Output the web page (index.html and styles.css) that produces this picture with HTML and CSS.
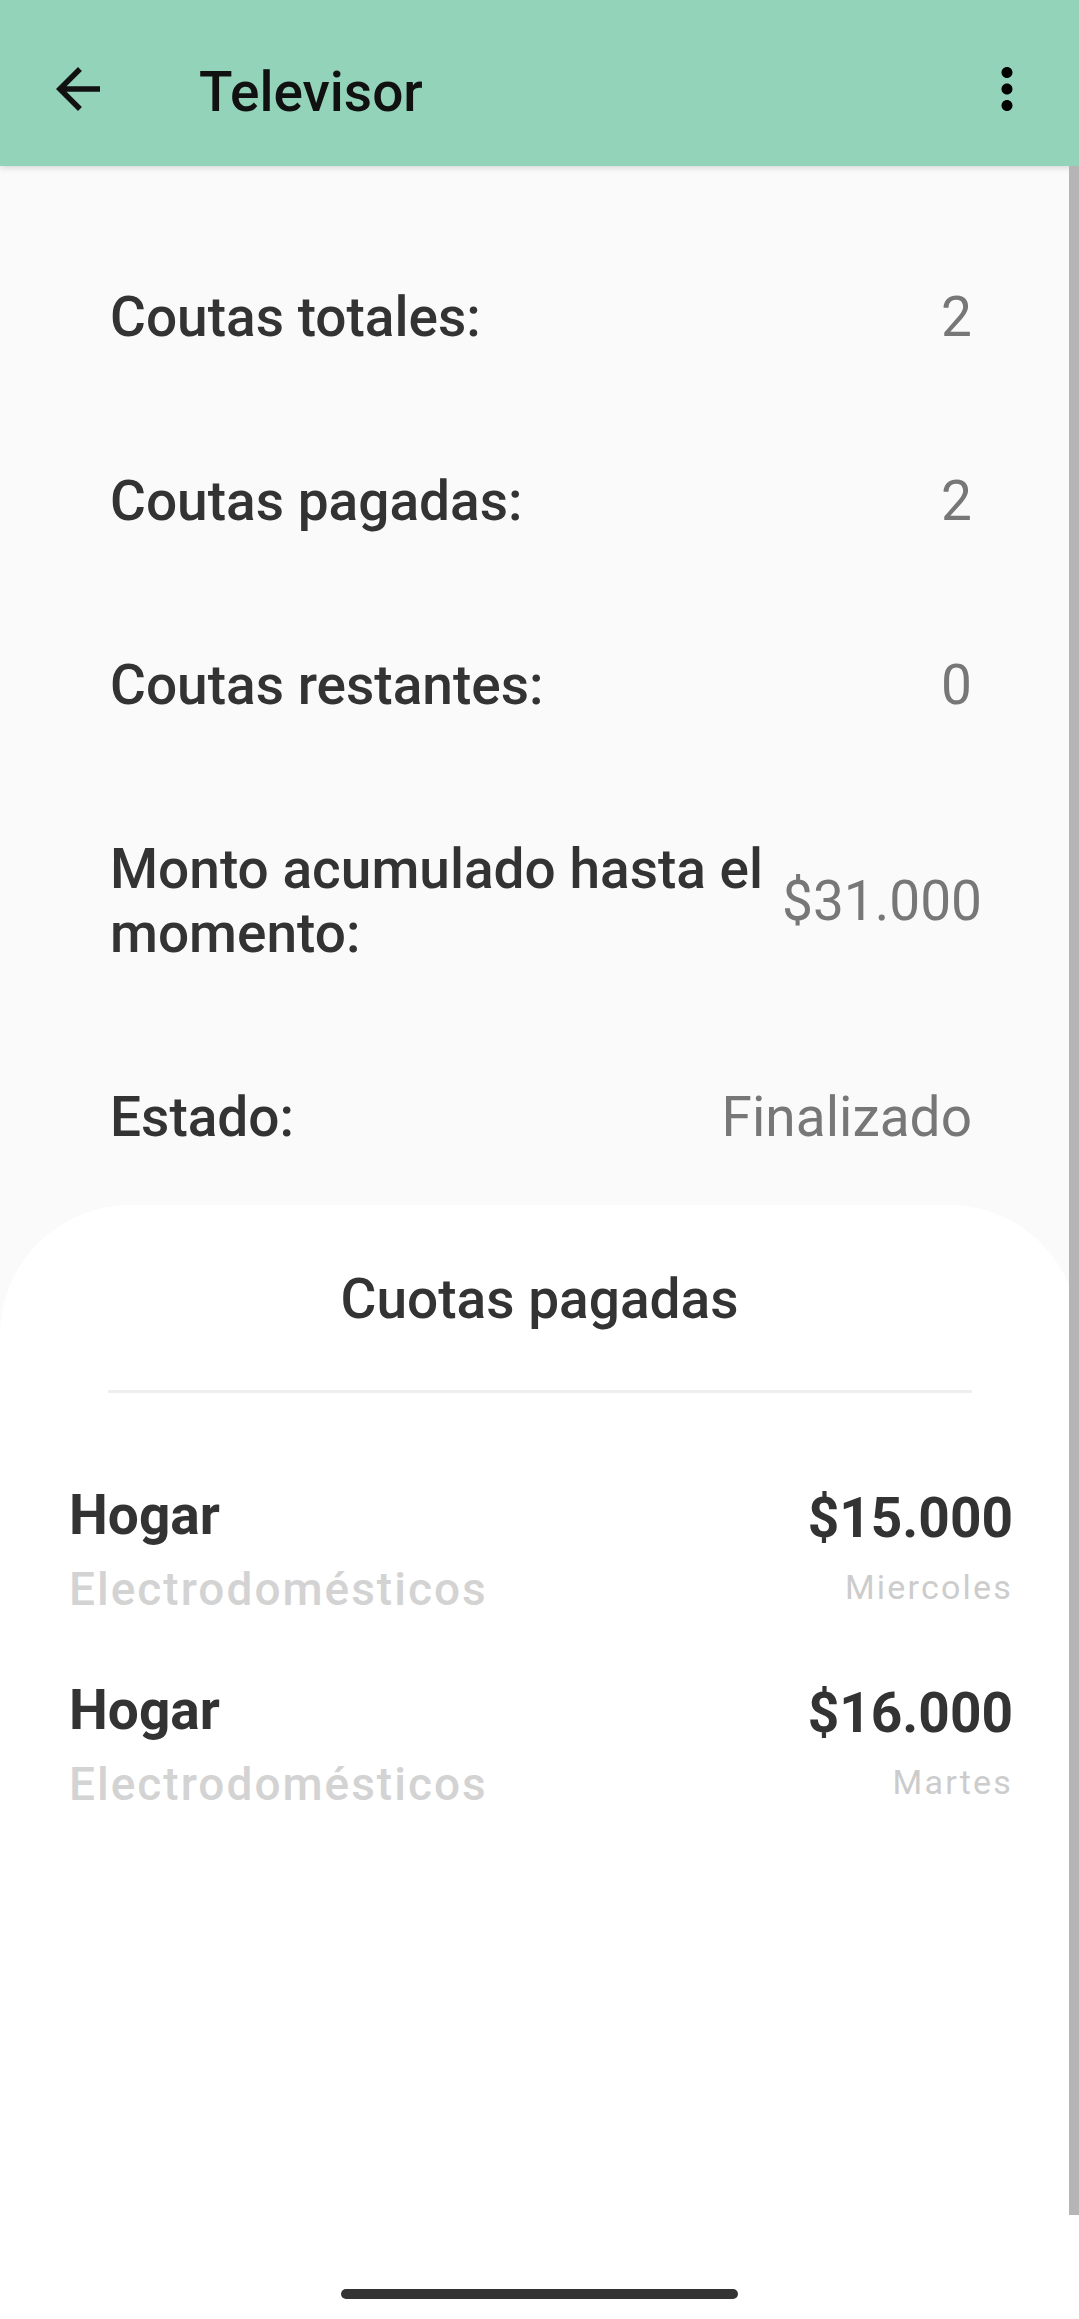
FILE: index.html
```html
<!DOCTYPE html>
<html lang="es">
<head>
<meta charset="utf-8">
<title>Televisor</title>
<link rel="stylesheet" href="styles.css">
</head>
<body>
<div class="screen">
  <header class="appbar">
    <span class="icon-btn back">
      <svg viewBox="0 0 24 24" width="66" height="66"><path d="M20 11H7.83l5.59-5.59L12 4l-8 8 8 8 1.41-1.41L7.83 13H20v-2z" fill="#111"/></svg>
    </span>
    <h1 class="title">Televisor</h1>
    <span class="icon-btn more">
      <svg viewBox="0 0 24 24" width="66" height="66"><path d="M12 8c1.1 0 2-.9 2-2s-.9-2-2-2-2 .9-2 2 .9 2 2 2zm0 2c-1.1 0-2 .9-2 2s.9 2 2 2 2-.9 2-2-.9-2-2-2zm0 6c-1.1 0-2 .9-2 2s.9 2 2 2 2-.9 2-2-.9-2-2-2z" fill="#000"/></svg>
    </span>
  </header>

  <main class="content">
    <section class="info">
      <div class="row"><span class="label">Coutas totales:</span><span class="value">2</span></div>
      <div class="row"><span class="label">Coutas pagadas:</span><span class="value">2</span></div>
      <div class="row"><span class="label">Coutas restantes:</span><span class="value">0</span></div>
      <div class="row"><span class="label">Monto acumulado hasta el momento:</span><span class="value value-wide">$31.000</span></div>
      <div class="row"><span class="label">Estado:</span><span class="value">Finalizado</span></div>
    </section>

    <section class="card">
      <h2 class="card-title">Cuotas pagadas</h2>
      <div class="divider"></div>
      <ul class="list">
        <li class="item">
          <div class="item-left">
            <span class="item-name">Hogar</span>
            <span class="item-cat">Electrodomésticos</span>
          </div>
          <div class="item-right">
            <span class="item-amount">$15.000</span>
            <span class="item-day">Miercoles</span>
          </div>
        </li>
        <li class="item">
          <div class="item-left">
            <span class="item-name">Hogar</span>
            <span class="item-cat">Electrodomésticos</span>
          </div>
          <div class="item-right">
            <span class="item-amount">$16.000</span>
            <span class="item-day">Martes</span>
          </div>
        </li>
      </ul>
    </section>
  </main>

  <div class="scrollbar"></div>
  <div class="gesture-bar"></div>
</div>
</body>
</html>
```

FILE: styles.css
```css
* { box-sizing: border-box; }

html, body {
  margin: 0;
  padding: 0;
  background: #ffffff;
}

body {
  font-family: Roboto, "Noto Sans", "Liberation Sans", sans-serif;
  color: #333333;
}

.screen {
  position: relative;
  width: 1079px;
  height: 2319px;
  overflow: hidden;
  display: flex;
  flex-direction: column;
}

/* App bar */
.appbar {
  height: 166px;
  padding: 12px 39px 0 45px;
  background: #93d3b9;
  display: flex;
  align-items: center;
  box-shadow: 0 2px 6px rgba(0, 0, 0, 0.14);
  position: relative;
  z-index: 2;
  flex-shrink: 0;
}

.icon-btn {
  width: 66px;
  height: 66px;
  display: flex;
}

.title {
  margin: 6px 0 0 88px;
  flex: 1;
  font-size: 55px;
  line-height: 64px;
  font-weight: 500;
  color: #111111;
}

/* Content */
.content {
  flex: 1;
  display: flex;
  flex-direction: column;
  background: #fafafa;
}

.info {
  padding: 59px 107px 0 110px;
}

.row {
  display: flex;
  align-items: center;
  justify-content: space-between;
  padding: 60px 0;
  font-size: 55px;
  line-height: 64px;
}

.row:last-child {
  padding-bottom: 56px;
}

.label {
  font-weight: 500;
  color: #333333;
  flex: 1;
  min-width: 0;
}

.value {
  font-weight: 400;
  color: #777777;
  margin-left: 10px;
  white-space: nowrap;
}

.value-wide {
  margin-right: -10px;
}

/* Card */
.card {
  flex: 1;
  background: #ffffff;
  border-radius: 130px 130px 0 0;
  padding-top: 62px;
}

.card-title {
  margin: 0;
  text-align: center;
  font-size: 55px;
  line-height: 64px;
  font-weight: 500;
  color: #333333;
}

.divider {
  margin: 59px 107px 0 108px;
  height: 3px;
  background: #eeeeee;
}

.list {
  list-style: none;
  margin: 90px 0 0 0;
  padding: 0 66px 0 69px;
  display: flex;
  flex-direction: column;
  gap: 64px;
}

.item {
  display: flex;
  justify-content: space-between;
}

.item-left,
.item-right {
  display: flex;
  flex-direction: column;
}

.item-right {
  align-items: flex-end;
}

.item-name {
  font-size: 55px;
  line-height: 64px;
  font-weight: 700;
  color: #333333;
}

.item-cat {
  margin-top: 18px;
  font-size: 46px;
  line-height: 49px;
  font-weight: 500;
  letter-spacing: 2px;
  color: #d3d3d3;
}

.item-amount {
  padding-top: 3px;
  font-size: 55px;
  line-height: 64px;
  font-weight: 700;
  color: #333333;
}

.item-day {
  margin-top: 17px;
  font-size: 34px;
  line-height: 40px;
  font-weight: 400;
  letter-spacing: 2.2px;
  color: #cccccc;
}

/* Overlays */
.scrollbar {
  position: absolute;
  top: 166px;
  right: 0;
  width: 10px;
  height: 2049px;
  background: #b5b5b5;
  z-index: 3;
}

.gesture-bar {
  position: absolute;
  top: 2289px;
  left: 341px;
  width: 397px;
  height: 10px;
  border-radius: 5px;
  background: #333333;
}
```
